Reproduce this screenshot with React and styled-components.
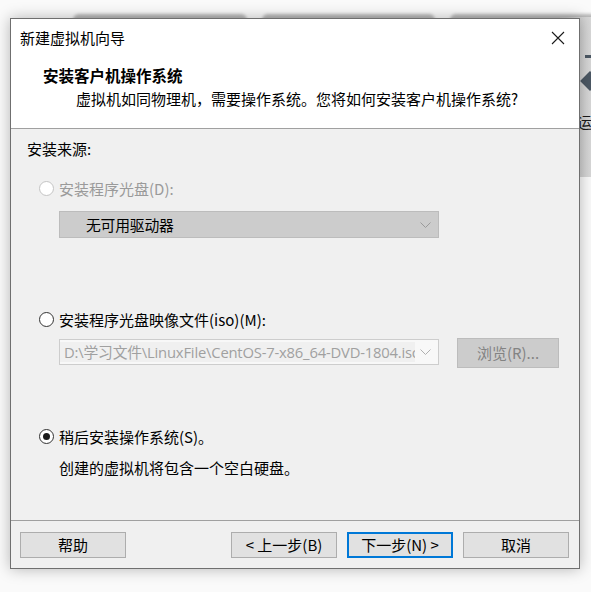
import styled, { createGlobalStyle } from "styled-components";

const GlobalStyle = createGlobalStyle`
  html, body {
    margin: 0;
    padding: 0;
    background: #fafafa;
  }
  body {
    font-family: "Microsoft YaHei UI", "Noto Sans CJK SC", sans-serif;
    font-size: 15px;
    color: #000000;
  }
`;

const Desktop = styled.div`
  position: relative;
  width: 591px;
  height: 592px;
  overflow: hidden;
  background: #fafafa;
`;

const BackTab = styled.div`
  position: absolute;
  top: 14px;
  left: ${(p) => p.left}px;
  width: ${(p) => p.width}px;
  height: 12px;
  border-radius: 6px 6px 0 0;
  background: #b9b9b9;
  filter: blur(1.5px);
`;

const BackWindow = styled.div`
  position: absolute;
  top: 17px;
  left: 560px;
  width: 60px;
  height: 160px;
  background: linear-gradient(to right, #bdbdbd 0px, #d4d4d4 24px, #dedede 40px);
`;

const BackBar = styled.div`
  position: absolute;
  top: 38px;
  left: 25px;
  width: 20px;
  height: 3px;
  background: #4c5864;
`;

const BackArrow = styled.div`
  position: absolute;
  top: 57px;
  left: 23px;
  width: 14px;
  height: 14px;
  background: #4c5864;
  transform: rotate(45deg);
`;

const BackText = styled.span`
  position: absolute;
  top: 95px;
  left: 17px;
  font-size: 15px;
  line-height: 20px;
  color: #1a1a1a;
`;

const Dialog = styled.div`
  position: absolute;
  left: 10px;
  top: 18px;
  width: 568px;
  height: 549px;
  border: 1px solid #6f6f6f;
  background: #f0f0f0;
  box-shadow: 0 0 14px rgba(0, 0, 0, 0.28);
  display: flex;
  flex-direction: column;
`;

const TitleBar = styled.div`
  height: 37px;
  flex: none;
  background: #ffffff;
  display: flex;
  align-items: center;
  justify-content: space-between;
  padding: 0 14px 0 9px;
`;

const WindowTitle = styled.span`
  font-size: 15px;
  line-height: 20px;
`;

const CloseIcon = styled.svg`
  width: 14px;
  height: 14px;
  display: block;
`;

const Header = styled.div`
  flex: none;
  background: #ffffff;
  border-bottom: 1px solid #a0a0a0;
  padding: 9px 0 0 32px;
  box-sizing: border-box;
  height: 73px;
  display: flex;
  flex-direction: column;
  gap: 4px;
`;

const HeaderTitle = styled.div`
  font-weight: bold;
  font-size: 15.5px;
  line-height: 20px;
`;

const HeaderSub = styled.div`
  padding-left: 33px;
  font-size: 15px;
  line-height: 20px;
`;

const Body = styled.div`
  flex: 1;
  display: flex;
  flex-direction: column;
  padding-left: 16px;
`;

const Text = styled.div`
  line-height: 20px;
  margin-top: ${(p) => p.top || 0}px;
  padding-left: ${(p) => p.indent || 0}px;
  color: ${(p) => (p.disabled ? "#9a9a9a" : "#000000")};
  white-space: nowrap;
`;

const RadioRow = styled.label`
  display: flex;
  align-items: center;
  height: 20px;
  margin-top: ${(p) => p.top}px;
  padding-left: 12px;
  gap: 5px;
  color: ${(p) => (p.disabled ? "#9a9a9a" : "#000000")};
  white-space: nowrap;
`;

const RadioCircle = styled.span`
  width: 13px;
  height: 13px;
  border-radius: 50%;
  border: 1px solid ${(p) => (p.disabled ? "#c4c4c4" : "#333333")};
  background: #ffffff;
  display: flex;
  align-items: center;
  justify-content: center;
  flex: none;
`;

const RadioDot = styled.span`
  width: 7px;
  height: 7px;
  border-radius: 50%;
  background: #1a1a1a;
`;

const Combo = styled.div`
  margin-left: 32px;
  margin-top: ${(p) => p.top || 0}px;
  width: 380px;
  height: ${(p) => p.height}px;
  box-sizing: border-box;
  border: 1px solid ${(p) => (p.dark ? "#bcbcbc" : "#cdcdcd")};
  background: ${(p) => (p.dark ? "#cccccc" : "#f8f8f8")};
  display: flex;
  align-items: center;
  justify-content: space-between;
  padding-right: 7px;
  flex: none;
`;

const ComboText = styled.span`
  line-height: 20px;
  padding-left: ${(p) => p.indent}px;
  color: ${(p) => (p.muted ? "#a0a0a0" : "#000000")};
  background: ${(p) => (p.muted ? "#f0f0f0" : "transparent")};
  width: ${(p) => (p.muted ? "351px" : "auto")};
  overflow: hidden;
  white-space: nowrap;
  font-family: "Open Sans", "Noto Sans CJK SC", sans-serif;
  font-size: 14.8px;
  letter-spacing: -0.2px;
`;

const Chevron = styled.svg`
  width: 11px;
  height: 6px;
  display: block;
  flex: none;
`;

const IsoRow = styled.div`
  display: flex;
  align-items: flex-start;
  margin-top: 9px;
  gap: 18px;
`;

const Browse = styled.div`
  width: 102px;
  height: 30px;
  box-sizing: border-box;
  border: 1px solid #bcbcbc;
  background: #cccccc;
  color: #838383;
  display: flex;
  align-items: center;
  justify-content: center;
  line-height: 20px;
`;

const Footer = styled.div`
  flex: none;
  border-top: 1px solid #a0a0a0;
  box-sizing: border-box;
  height: 48px;
  padding: 11px 10px 0 9px;
  display: flex;
  justify-content: space-between;
  align-items: flex-start;
`;

const ButtonGroup = styled.div`
  display: flex;
  gap: 10px;
`;

const Button = styled.div`
  width: 106px;
  height: 26px;
  box-sizing: border-box;
  border: ${(p) => (p.primary ? "2px solid #0078d7" : "1px solid #adadad")};
  background: #e1e1e1;
  display: flex;
  align-items: center;
  justify-content: center;
  line-height: 20px;
  white-space: pre;
`;

const ChevronDown = ({ color }) => (
  <Chevron viewBox="0 0 11 6">
    <path d="M0.5 0.5 L5.5 5.5 L10.5 0.5" fill="none" stroke={color} strokeWidth="1" />
  </Chevron>
);

const App = () => {
  return (
    <Desktop>
      <GlobalStyle />
      <BackTab left={73} width={174} />
      <BackTab left={262} width={173} />
      <BackTab left={450} width={150} />
      <BackWindow>
        <BackBar />
        <BackArrow />
        <BackText>运</BackText>
      </BackWindow>
      <Dialog>
        <TitleBar>
          <WindowTitle>新建虚拟机向导</WindowTitle>
          <CloseIcon viewBox="0 0 14 14">
            <path d="M1 1 L13 13 M13 1 L1 13" stroke="#1a1a1a" strokeWidth="1.1" fill="none" />
          </CloseIcon>
        </TitleBar>
        <Header>
          <HeaderTitle>安装客户机操作系统</HeaderTitle>
          <HeaderSub>虚拟机如同物理机，需要操作系统。您将如何安装客户机操作系统?</HeaderSub>
        </Header>
        <Body>
          <Text top={10}>安装来源:</Text>
          <RadioRow top={19} disabled>
            <RadioCircle disabled />
            安装程序光盘(D):
          </RadioRow>
          <Combo top={13} height={27} dark>
            <ComboText indent={26}>无可用驱动器</ComboText>
            <ChevronDown color="#9a9a9a" />
          </Combo>
          <RadioRow top={71}>
            <RadioCircle />
            安装程序光盘映像文件(iso)(M):
          </RadioRow>
          <IsoRow>
            <Combo top={1} height={26}>
              <ComboText indent={4} muted>
                D:\学习文件\LinuxFile\CentOS-7-x86_64-DVD-1804.iso
              </ComboText>
              <ChevronDown color="#b0b0b0" />
            </Combo>
            <Browse>浏览(R)...</Browse>
          </IsoRow>
          <RadioRow top={58}>
            <RadioCircle>
              <RadioDot />
            </RadioCircle>
            稍后安装操作系统(S)。
          </RadioRow>
          <Text top={12} indent={32}>创建的虚拟机将包含一个空白硬盘。</Text>
        </Body>
        <Footer>
          <Button>帮助</Button>
          <ButtonGroup>
            <Button>{"< 上一步(B)"}</Button>
            <Button primary>{"下一步(N) >"}</Button>
            <Button>取消</Button>
          </ButtonGroup>
        </Footer>
      </Dialog>
    </Desktop>
  );
};

export default App;
